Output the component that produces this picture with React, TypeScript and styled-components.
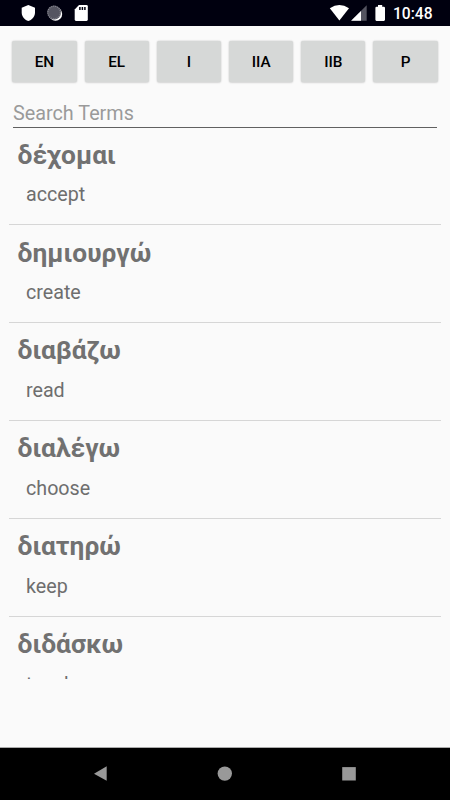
import React from "react";
import styled, { createGlobalStyle } from "styled-components";

const GlobalStyle = createGlobalStyle`
  * { box-sizing: border-box; }
  body { margin: 0; background: #fafafa; font-family: Roboto, "Noto Sans", sans-serif; }
`;

const Screen = styled.div`
  width: 450px;
  height: 800px;
  display: flex;
  flex-direction: column;
  background: #fafafa;
  overflow: hidden;
`;

const StatusBar = styled.header`
  flex: none;
  height: 26px;
  display: flex;
  background: #00000f;
`;

const StatusIcons = styled.svg`
  display: block;
  flex: none;
`;

const Clock = styled.time`
  margin-left: 3px;
  font-size: 15.6px;
  line-height: 28px;
  font-weight: 500;
  color: #fff;
`;

const Filters = styled.nav`
  flex: none;
  display: flex;
  gap: 8px;
  padding: 15px 12.3px 0 12.3px;
`;

const FilterButton = styled.button`
  flex: 1 1 0;
  height: 40.5px;
  padding: 1px 0 0;
  border: 0;
  border-radius: 2px;
  background: #d6d8d7;
  box-shadow: 0 0 2px rgba(0, 0, 0, 0.12), 0 0.5px 2px rgba(0, 0, 0, 0.12);
  color: #000;
  font: 500 15.3px/20px Roboto, sans-serif;
`;

const SearchField = styled.input`
  flex: none;
  height: 32px;
  margin: 14.5px 13px 0;
  padding: 3px 0 0;
  border: 0;
  border-bottom: 1px solid #606060;
  border-radius: 0;
  outline: 0;
  background: transparent;
  color: #212121;
  font: 400 19.8px/24px Roboto, sans-serif;
  &::placeholder { color: #9a9a9a; opacity: 1; }
`;

const TermList = styled.ul`
  flex: none;
  height: 551px;
  margin: 0 9px;
  padding: 0;
  list-style: none;
  overflow: hidden;
`;

const TermRow = styled.li`
  height: 97.9px;
  padding: 10.6px 9px 0 8.6px;
  border-bottom: 1px solid #d6d6d6;
  &:first-child { height: 97px; padding-top: 10px; }
`;

const Term = styled.div`
  font-size: 26.3px;
  line-height: 34px;
  font-weight: 700;
  color: #717171;
`;

const Meaning = styled.div`
  padding: 10.45px 0 0 8.4px;
  font-size: 19.7px;
  line-height: 26px;
  color: #6e6e6e;
`;

const NavigationBar = styled.footer`
  flex: none;
  height: 53px;
  margin-top: auto;
  border-top: 1px solid #aaa;
  background: #000;
`;

const filters = ["EN", "EL", "I", "IIA", "IIB", "P"];
const terms = [
  ["δέχομαι", "accept"],
  ["δημιουργώ", "create"],
  ["διαβάζω", "read"],
  ["διαλέγω", "choose"],
  ["διατηρώ", "keep"],
  ["διδάσκω", "teach"],
];

export default function App() {
  return (
    <>
      <GlobalStyle />
      <Screen>
        <StatusBar>
          <StatusIcons width="390" height="26" viewBox="0 0 390 26">
            <path d="M28.3 5 35 7.7v4.7c0 4-2.7 7.2-6.7 8.5-4-1.3-6.6-4.5-6.6-8.5V7.7z" fill="#fff" />
            <circle cx="55.5" cy="14" r="6.7" fill="#fff" />
            <circle cx="54.1" cy="12.5" r="6.9" fill="#555561" />
            <circle cx="54.1" cy="12.5" r="6.3" fill="none" stroke="#898992" strokeWidth="1.2" strokeDasharray="1 1" />
            <path d="M79 5h7.5q1.3 0 1.3 1.3v13.3q0 1.3-1.3 1.3H76q-1.3 0-1.3-1.3V9.5z" fill="#fff" />
            <path d="M79.9 7v3M82.4 7v3M84.9 7v3" stroke="#00000f" strokeWidth="1.5" />
            <path d="M329.8 8.3q9.6-6.7 19.2 0L339.4 20.5z" fill="#fff" />
            <path d="M366.7 5.2v15.6h-15.6z" fill="#555561" />
            <path d="M361 10.9v9.9h-9.9z" fill="#fff" />
            <path d="M378 5h4.2v1.8h1.6q1.2 0 1.2 1.2v11.8q0 1.1-1.2 1.1h-7.3q-1.1 0-1.1-1.1V8q0-1.2 1.1-1.2H378z" fill="#fff" />
          </StatusIcons>
          <Clock>10:48</Clock>
        </StatusBar>
        <Filters>
          {filters.map((label) => <FilterButton key={label}>{label}</FilterButton>)}
        </Filters>
        <SearchField placeholder="Search Terms" aria-label="Search Terms" />
        <TermList>
          {terms.map(([term, meaning]) => (
            <TermRow key={term}>
              <Term lang="el">{term}</Term>
              <Meaning>{meaning}</Meaning>
            </TermRow>
          ))}
        </TermList>
        <NavigationBar>
          <StatusIcons width="450" height="52" viewBox="0 748 450 52">
            <path d="m94 773.8 12.7-7.6v14.6z" fill="#999" />
            <circle cx="224.8" cy="773.6" r="7.2" fill="#999" />
            <path d="M342.2 767.1h13.6v13.4h-13.6z" fill="#999" />
          </StatusIcons>
        </NavigationBar>
      </Screen>
    </>
  );
}
